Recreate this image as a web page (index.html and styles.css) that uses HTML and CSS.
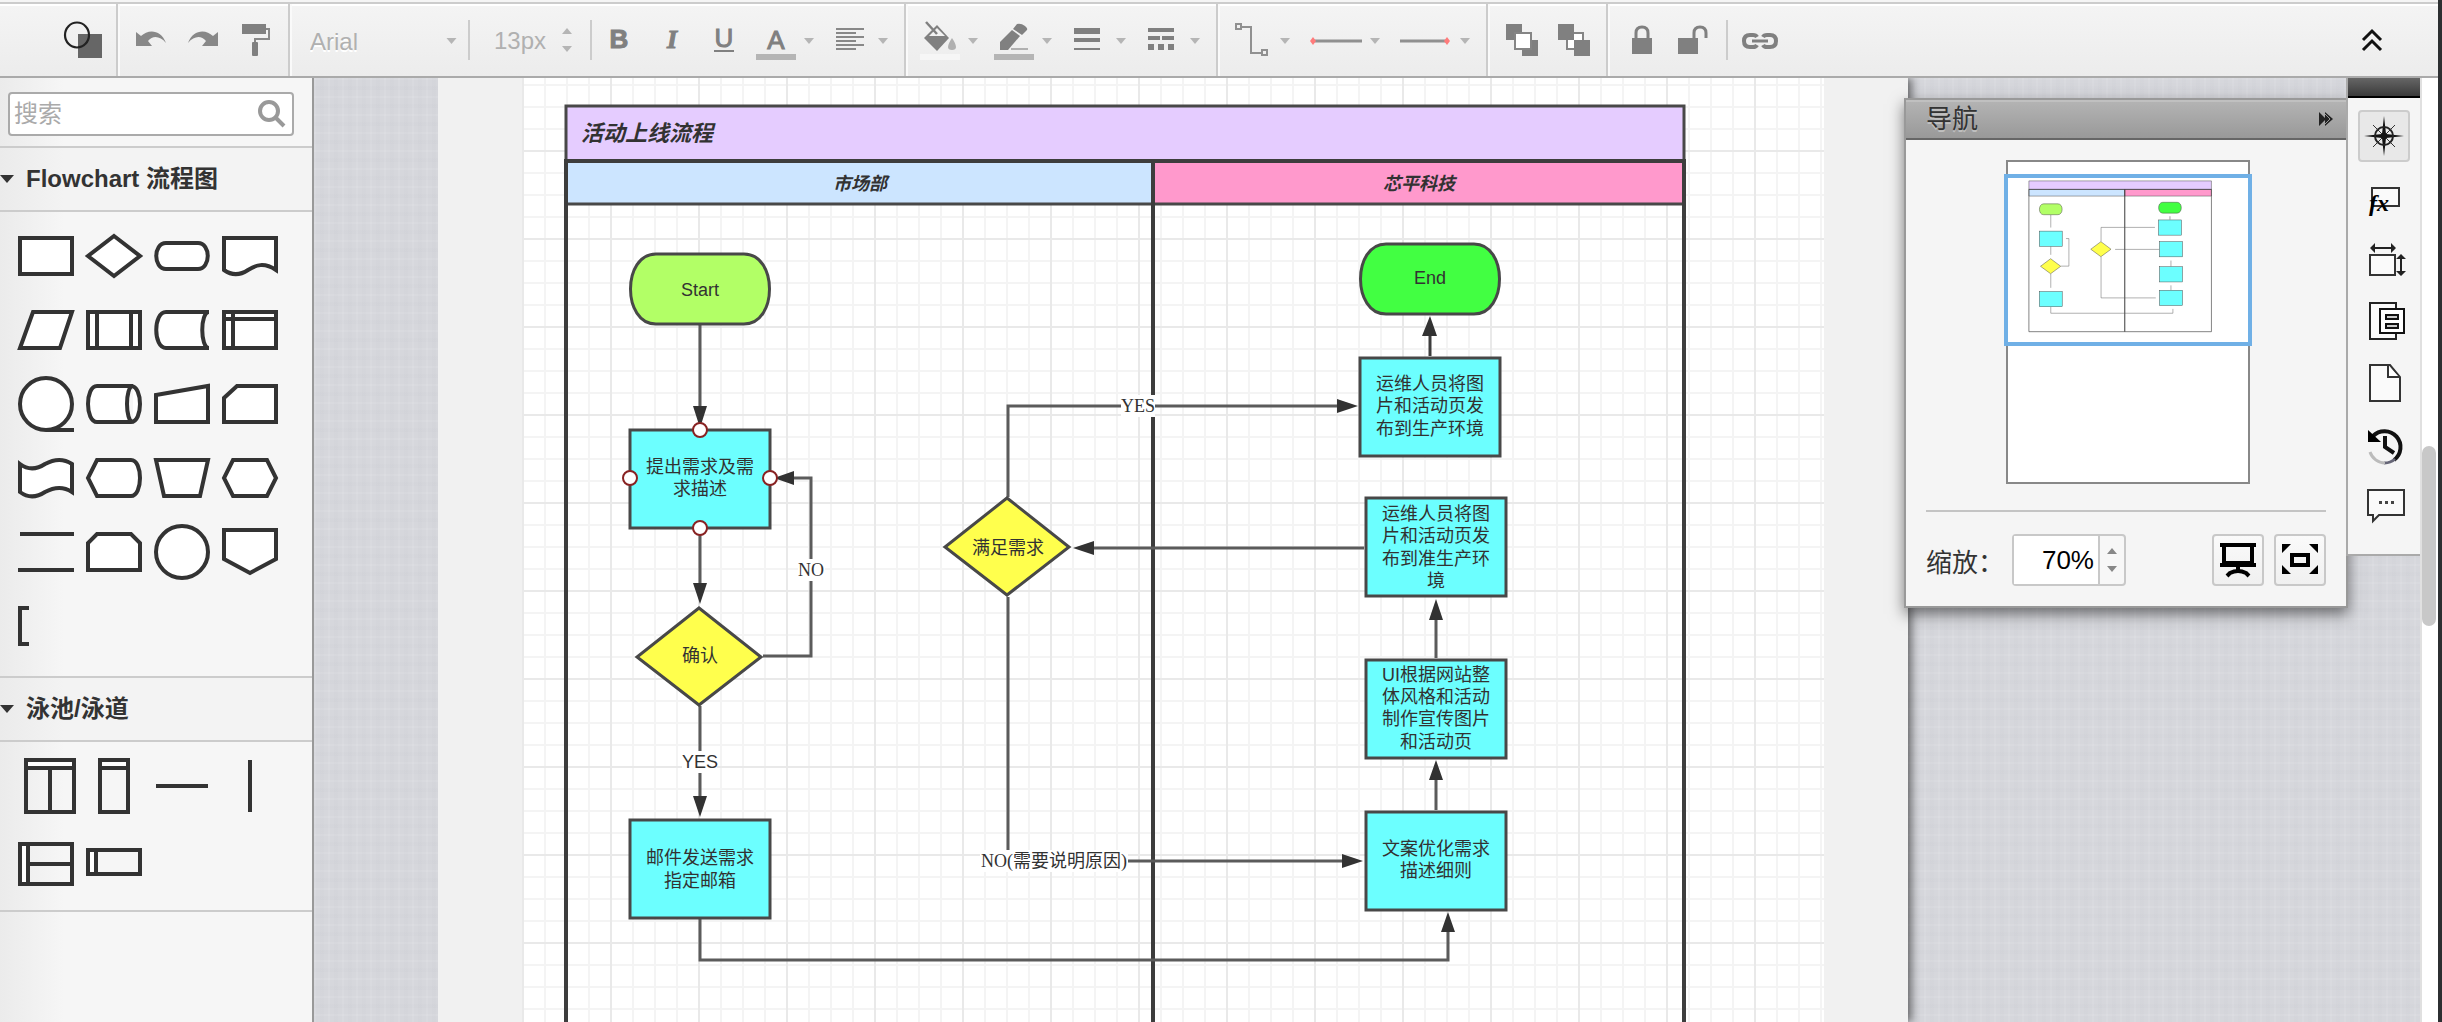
FILE: index.html
```html
<!DOCTYPE html>
<html lang="zh-CN">
<head>
<meta charset="utf-8">
<title>活动上线流程</title>
<link rel="stylesheet" href="styles.css">
</head>
<body>
<div class="app">
  <header class="toolbar">
    <div class="group group-brand">
      <button class="tool" aria-label="图形"><svg width="52" height="70" viewBox="0 6 52 70"><rect x="21" y="34" width="24" height="24" fill="#666"/><ellipse cx="20" cy="35" rx="12" ry="12.500" fill="none" stroke="#222" stroke-width="2.200"/></svg></button>
    </div>
    <div class="group">
      <button class="tool" aria-label="撤销"><svg width="52" height="70" viewBox="0 6 52 70"><path d="M10 32l5 4c7-7 20-7 25 7-6-7-13-8-18-2l4 5H10z" fill="#888"/></svg></button>
      <button class="tool" aria-label="恢复"><svg width="52" height="70" viewBox="0 6 52 70"><path d="M40 32l-5 4c-7-7-20-7-25 7 6-7 13-8 18-2l-4 5h16z" fill="#888"/></svg></button>
      <button class="tool" aria-label="格式刷"><svg width="52" height="70" viewBox="0 6 52 70"><rect x="12" y="24" width="24" height="10" fill="#808080"/><path d="M36 29h3v10H25v3" fill="none" stroke="#888" stroke-width="2"/><rect x="22" y="42" width="6" height="14" rx="1" fill="#808080"/></svg></button>
    </div>
    <div class="group group-text">
      <label class="font"><select aria-label="字体"><option>Arial</option></select><svg width="20" height="70" viewBox="0 6 20 70"><path class="caret" d="M3 38h10l-5 6z"/></svg></label>
      <span class="rule"></span>
      <label class="size"><input type="text" value="13px" aria-label="字号"><svg width="20" height="70" viewBox="0 6 20 70"><path class="caret" d="M2 34h10l-5-6zM2 46h10l-5 6z"/></svg></label>
      <span class="rule"></span>
      <button class="tool" aria-label="粗体"><svg width="52" height="70" viewBox="0 6 52 70"><text class="letter bold" x="27" y="48">B</text></svg></button>
      <button class="tool" aria-label="斜体"><svg width="52" height="70" viewBox="0 6 52 70"><text class="letter italic" x="28" y="48">I</text></svg></button>
      <button class="tool" aria-label="下划线"><svg width="52" height="70" viewBox="0 6 52 70"><text class="letter" x="28" y="47">U</text><path d="M18 51h20" stroke="#808080" stroke-width="2"/></svg></button>
      <button class="tool drop" aria-label="字体颜色"><svg width="74" height="70" viewBox="0 6 74 70"><text class="letter" x="28" y="49">A</text><path d="M8 57h40" stroke="#b5b5b5" stroke-width="6"/><path class="caret" d="M56 38h10l-5 6z"/></svg></button>
      <button class="tool drop" aria-label="对齐"><svg width="74" height="70" viewBox="0 6 74 70"><path d="M14 29h28M14 33h20M14 37h28M14 41h20M14 45h28M14 49h20" stroke="#888" stroke-width="2"/><path class="caret" d="M56 38h10l-5 6z"/></svg></button>
    </div>
    <div class="group">
      <button class="tool drop" aria-label="填充"><svg width="74" height="70" viewBox="0 6 74 70"><path d="M8 57h40" stroke="#f6f6f6" stroke-width="6"/><path d="M12 38L25 25l12 13-12 13z" fill="#808080"/><path d="M17 36l8-8 8 8z" fill="#f2f2f2"/><path d="M14 22l11 12" stroke="#808080" stroke-width="2.500"/><path d="M40 38q8 12 0 12t0-12z" fill="#b0b0b0"/><path class="caret" d="M56 38h10l-5 6z"/></svg></button>
      <button class="tool drop" aria-label="线条颜色"><svg width="74" height="70" viewBox="0 6 74 70"><path d="M8 57h40" stroke="#b5b5b5" stroke-width="6"/><path d="M14 50v-8l12-12 8 6-12 14z" fill="#808080"/><path d="M27 29l4-5q4-1 8 2t1 5l-4 4z" fill="#808080"/><path d="M25 49h17" stroke="#b0b0b0" stroke-width="2"/><path class="caret" d="M56 38h10l-5 6z"/></svg></button>
      <button class="tool drop" aria-label="线条宽度"><svg width="74" height="70" viewBox="0 6 74 70"><path d="M14 28h26v6H14zM14 38h26v4H14zM14 48h26v2H14z" fill="#808080"/><path class="caret" d="M56 38h10l-5 6z"/></svg></button>
      <button class="tool drop" aria-label="线条样式"><svg width="74" height="70" viewBox="0 6 74 70"><path d="M14 28h26v4H14zM14 36h12v4H14zM28 36h12v4H28zM14 44h6v6h-6zM24 44h6v6h-6zM34 44h6v6h-6z" fill="#808080"/><path class="caret" d="M56 38h10l-5 6z"/></svg></button>
    </div>
    <div class="group">
      <button class="tool drop" aria-label="连线类型"><svg width="74" height="70" viewBox="0 6 74 70"><path d="M12 24h5v5h-5zM38 50h5v5h-5zM17 27h10v26h11" fill="none" stroke="#909090" stroke-width="2"/><path class="caret" d="M56 38h10l-5 6z"/></svg></button>
      <button class="tool wide" aria-label="起点"><svg width="90" height="70" viewBox="0 6 90 70"><path d="M14 41h50" stroke="#909090" stroke-width="3"/><path d="M15 37l3 4-3 4-3-4z" fill="#ff7b7b"/><path class="caret" d="M72 38h10l-5 6z"/></svg></button>
      <button class="tool wide" aria-label="终点"><svg width="90" height="70" viewBox="0 6 90 70"><path d="M12 41h46" stroke="#909090" stroke-width="3"/><path d="M59 37l3 4-3 4-3-4z" fill="#ff7b7b"/><path class="caret" d="M72 38h10l-5 6z"/></svg></button>
    </div>
    <div class="group group-even">
      <button class="tool" aria-label="置于顶层"><svg width="52" height="70" viewBox="0 6 52 70"><path d="M10 24h16v16H10zM26 40h16v16H26z" fill="#808080"/><path d="M19 33h16v16H19z" fill="#fff" stroke="#858585" stroke-width="2"/></svg></button>
      <button class="tool" aria-label="置于底层"><svg width="52" height="70" viewBox="0 6 52 70"><path d="M19 33h16v16H19z" fill="#fff" stroke="#858585" stroke-width="2"/><path d="M10 24h16v16H10zM26 40h16v16H26z" fill="#808080"/></svg></button>
    </div>
    <div class="group group-even group-last">
      <button class="tool" aria-label="锁定"><svg width="52" height="70" viewBox="0 6 52 70"><path d="M16 38h20v16H16z" fill="#808080"/><path d="M20 39v-6q0-6 6-6t6 6v6" fill="none" stroke="#808080" stroke-width="3"/></svg></button>
      <button class="tool" aria-label="解锁"><svg width="52" height="70" viewBox="0 6 52 70"><path d="M10 38h20v16H10z" fill="#808080"/><path d="M26 39v-6q0-6 6-6t6 6v5" fill="none" stroke="#808080" stroke-width="3"/></svg></button>
      <span class="rule rule-link"></span>
      <button class="tool" aria-label="链接"><svg width="52" height="70" viewBox="0 6 52 70"><path d="M23 37q-1-2-4-2h-3q-6 0-6 6t6 6h3q3 0 4-2M29 37q1-2 4-2h3q6 0 6 6t-6 6h-3q-3 0-4-2" fill="none" stroke="#808080" stroke-width="4"/><path d="M18 41h16" stroke="#808080" stroke-width="3"/></svg></button>
    </div>
    <button class="tool collapse" aria-label="收起工具栏"><svg width="52" height="70" viewBox="0 6 52 70"><path d="M17 40l9-9 9 9M17 50l9-9 9 9" fill="none" stroke="#111" stroke-width="3"/></svg></button>
  </header>

  <div class="workspace">
    <aside class="sidebar">
      <div class="search">
        <input type="text" placeholder="搜索" aria-label="搜索">
        <svg width="32" height="32" viewBox="0 0 32 32"><circle cx="13" cy="13" r="9" fill="none" stroke="#999" stroke-width="4"/><path d="M19 19l9 9" stroke="#999" stroke-width="4"/></svg>
      </div>
      <h2 class="section"><svg width="14" height="8"><path d="M0 0h14l-7 8z" fill="#333"/></svg>Flowchart 流程图</h2>
      <div class="shapes">
        <svg viewBox="-34 -37 68 74"><path d="M-26-18h52v36h-52z"/></svg>
        <svg viewBox="-34 -37 68 74"><path d="M0-20L26 0 0 20-26 0z"/></svg>
        <svg viewBox="-34 -37 68 74"><path d="M-16-13h32c13 0 13 26 0 26h-32c-13 0-13-26 0-26z"/></svg>
        <svg viewBox="-34 -37 68 74"><path d="M-26-18h52v32C14 6 6 9-2 14c-9 6-17 5-24 0z"/></svg>
        <svg viewBox="-34 -37 68 74"><path d="M-13-18h39l-12 36h-40z"/></svg>
        <svg viewBox="-34 -37 68 74"><path d="M-26-18h52v36h-52zM-17-18v36M17-18v36"/></svg>
        <svg viewBox="-34 -37 68 74"><path d="M27-18h-43c-13 0-13 36 0 36h43c-9 0-9-36 0-36z"/></svg>
        <svg viewBox="-34 -37 68 74"><path d="M-26-18h52v36h-52zM-17-18v36M-26-11h52"/></svg>
        <svg viewBox="-34 -37 68 74"><circle r="26"/><path d="M0 26h28"/></svg>
        <svg viewBox="-34 -37 68 74"><path d="M-17-18h34c12 0 12 36 0 36h-34c-12 0-12-36 0-36zM19-18c-8 0-8 36 0 36"/></svg>
        <svg viewBox="-34 -37 68 74"><path d="M-26-9l52-9v36h-52z"/></svg>
        <svg viewBox="-34 -37 68 74"><path d="M-13-18h39v36h-52V-6z"/></svg>
        <svg viewBox="-34 -37 68 74"><path d="M-26-14c8 6 16 6 25 0 9-5 18-6 27 0v28c-9-6-18-5-27 0-9 6-17 6-25 0z"/></svg>
        <svg viewBox="-34 -37 68 74"><path d="M-17-18h34c12 0 12 36 0 36h-34L-26 0z"/></svg>
        <svg viewBox="-34 -37 68 74"><path d="M-26-18h52l-8 36h-36z"/></svg>
        <svg viewBox="-34 -37 68 74"><path d="M-17-18h34L26 0l-9 18h-34L-26 0z"/></svg>
        <svg viewBox="-34 -37 68 74"><path d="M-26-18h54M-28 18h56"/></svg>
        <svg viewBox="-34 -37 68 74"><path d="M-17-18h34l9 9v27h-52V-9z"/></svg>
        <svg viewBox="-34 -37 68 74"><circle r="26"/></svg>
        <svg viewBox="-34 -37 68 74"><path d="M-26-22h52V7L0 21-26 7z"/></svg>
        <svg viewBox="-34 -37 68 74"><path class="open" d="M-17-18h-9v36h9"/></svg>
      </div>
      <h2 class="section"><svg width="14" height="8"><path d="M0 0h14l-7 8z" fill="#333"/></svg>泳池/泳道</h2>
      <div class="shapes shapes-lanes">
        <svg viewBox="-34 -39 68 78"><path class="open" d="M-20-26h48v52h-48zM4-18v44"/><path d="M-20-26h48v8h-48z"/></svg>
        <svg viewBox="-34 -39 68 78"><path class="open" d="M-14-26h28v52h-28z"/><path d="M-14-26h28v8h-28z"/></svg>
        <svg viewBox="-34 -39 68 78"><path d="M-26 0h52"/></svg>
        <svg viewBox="-34 -39 68 78"><path d="M0-26v52"/></svg>
        <svg viewBox="-34 -39 68 78"><path class="open" d="M-26-20h52v40h-52zM-18 0h44"/><path d="M-26-20h8v40h-8z"/></svg>
        <svg viewBox="-34 -39 68 78"><path class="open" d="M-26-14h52v24h-52z"/><path d="M-26-14h8v24h-8z"/></svg>
      </div>
    </aside>

    <main class="canvas">
      <div class="page">
        <div class="paper">
          <svg class="diagram" width="1302" height="944" viewBox="522 78 1302 944">
            <defs>
              <g id="flow" stroke="#484848" stroke-width="3">
                <path d="M566 106h1118v55H566z" fill="#e5ccff"/>
                <path d="M566 161h587v43H566z" fill="#cce5ff"/>
                <path d="M1153 161h531v43h-531z" fill="#ff99cc"/>
                <path d="M566 161h587v918H566zM1153 161h531v918h-531z" fill="none" stroke-width="4" stroke="#3d3d3d"/>
                <g fill="none" stroke="#5b5b5b">
                  <path d="M700 325v82M700 529v54M700 706v90"/>
                  <path d="M763 656h48V478h-18"/>
                  <path d="M1008 497v-91h330"/>
                  <path d="M1364 548h-270"/>
                  <path d="M1008 597v264h335"/>
                  <path d="M700 919v41h748v-28"/>
                  <path d="M1436 810v-30M1436 658v-38"/>
                  <path d="M1430 356v-22" stroke="#3d3d3d"/>
                </g>
                <path d="M656 254h88c34 0 34 70 0 70h-88c-34 0-34-70 0-70z" fill="#b2ff66"/>
                <path d="M1386 244h88c34 0 34 70 0 70h-88c-34 0-34-70 0-70z" fill="#42ff42"/>
                <g fill="#6cffff">
                  <rect x="630" y="430" width="140" height="98"/>
                  <rect x="630" y="820" width="140" height="98"/>
                  <rect x="1360" y="358" width="140" height="98"/>
                  <rect x="1366" y="498" width="140" height="98"/>
                  <rect x="1366" y="660" width="140" height="98"/>
                  <rect x="1366" y="812" width="140" height="98"/>
                </g>
                <path d="M699 608l62 49-62 48-62-48zM1007 498l62 49-62 48-62-48z" fill="#ffff4d"/>
              </g>
            </defs>
            <use href="#flow"/>
            <path fill="#323232" d="M693 406h14l-7 22zM693 583h14l-7 21zM693 796h14l-7 21zM794 471v14l-20-7zM1337 399v14l21-7zM1094 541v14l-21-7zM1342 854v14l21-7zM1441 932h14l-7-20zM1429 780h14l-7-20zM1429 620h14l-7-21zM1422 336h15l-7-20z"/>
            <path fill="#fff" d="M682 751h35v22h-35zM798 559h27v22h-27zM1121 395h34v22h-34zM980 850h148v22H980z"/>
            <g fill="#fff" stroke="#882222" stroke-width="2"><circle cx="700" cy="430" r="7"/><circle cx="630" cy="478" r="7"/><circle cx="770" cy="478" r="7"/><circle cx="700" cy="528" r="7"/></g>
            <text class="pool-title" x="581" y="141">活动上线流程</text>
            <g class="lane-title"><text x="860" y="190">市场部</text><text x="1419" y="190">芯平科技</text></g>
            <g class="label">
              <text x="700" y="296">Start</text>
              <text x="1430" y="284">End</text>
              <text><tspan x="700" y="473">提出需求及需</tspan><tspan x="700" y="495">求描述</tspan></text>
              <text x="700" y="662">确认</text>
              <text x="700" y="768">YES</text>
              <text><tspan x="700" y="864">邮件发送需求</tspan><tspan x="700" y="887">指定邮箱</tspan></text>
              <text x="1008" y="554">满足需求</text>
              <text><tspan x="1430" y="390">运维人员将图</tspan><tspan x="1430" y="412">片和活动页发</tspan><tspan x="1430" y="435">布到生产环境</tspan></text>
              <text><tspan x="1436" y="520">运维人员将图</tspan><tspan x="1436" y="542">片和活动页发</tspan><tspan x="1436" y="565">布到准生产环</tspan><tspan x="1436" y="587">境</tspan></text>
              <text><tspan x="1436" y="681">UI根据网站整</tspan><tspan x="1436" y="703">体风格和活动</tspan><tspan x="1436" y="725">制作宣传图片</tspan><tspan x="1436" y="748">和活动页</tspan></text>
              <text><tspan x="1436" y="855">文案优化需求</tspan><tspan x="1436" y="877">描述细则</tspan></text>
            </g>
            <g class="label serif"><text x="811" y="576">NO</text><text x="1138" y="412">YES</text><text x="1054" y="867">NO(需要说明原因)</text></g>
          </svg>
        </div>
      </div>

      <section class="navigator">
        <header class="nav-title"><h2>导航</h2><button aria-label="收起"><svg width="16" height="16" viewBox="0 0 16 16"><path d="M1 1l7 7-7 7zM7 1l8 7-8 7z" fill="#222"/><path d="M7 3l5 5-5 5" fill="none" stroke="#999"/></svg></button></header>
        <div class="nav-body">
          <div class="overview">
            <svg viewBox="438 -16 1470 2065" preserveAspectRatio="none"><use href="#flow"/></svg>
            <div class="viewport"></div>
          </div>
          <div class="zoom">
            <label for="zoom">缩放：</label>
            <div class="spinner"><input id="zoom" type="text" value="70%"><svg width="24" height="48" viewBox="0 0 24 48"><path d="M7 18h10l-5-6zM7 30h10l-5 6z" fill="#888"/></svg></div>
            <button class="push push-first" aria-label="演示"><svg width="40" height="40" viewBox="0 0 40 40"><path d="M2 5h36M6 5v18h28V5M2 25h36M20 25v6M9 36l3-3q4-2 8-2t8 2l3 3" fill="none" stroke="#000" stroke-width="4"/></svg></button>
            <button class="push" aria-label="全屏"><svg width="40" height="40" viewBox="0 0 40 40"><path d="M12 15h16v10H12z" fill="none" stroke="#000" stroke-width="4"/><path d="M2 4h9l-9 9zM38 4h-9l9 9zM2 34h9l-9-9zM38 34h-9l9-9z"/></svg></button>
          </div>
        </div>
      </section>

      <nav class="dock">
        <div class="dock-cap"></div>
        <button class="dock-item active" aria-label="导航"><svg viewBox="-24 -24 48 48"><path d="M0-20l2 18 18 2-18 2-2 18-2-18-18-2 18-2z" fill="#111"/><circle r="9" fill="none" stroke="#222" stroke-width="2"/><path d="M-11-11l22 22M11-11l-22 22" stroke="#333" stroke-width="1"/><circle r="3" fill="#111"/></svg></button>
        <button class="dock-item" aria-label="图形属性"><svg viewBox="-24 -24 48 48"><path d="M-12-10h27v18h-27z" fill="#fafafa" stroke="#333" stroke-width="2"/><text class="fx" x="-5" y="13">fx</text></svg></button>
        <button class="dock-item" aria-label="尺寸"><svg viewBox="-24 -24 48 48"><path d="M-14-5h25v20h-25z" fill="#fafafa" stroke="#333" stroke-width="2"/><path d="M-12-12h22M17-3v16" stroke="#222" stroke-width="2"/><path d="M-14-12l5-5v10zM12-12l-5-5V-7zM17-6l-5 5h10zM17 16l-5-5h10z" fill="#222"/></svg></button>
        <button class="dock-item" aria-label="图层"><svg viewBox="-24 -24 48 48"><path d="M-14-19h26v36h-26z" fill="#fafafa" stroke="#222" stroke-width="2"/><path d="M-4-13h24v24H-4z" fill="#fff" stroke="#111" stroke-width="2"/><path d="M2-7h12v4H2zM2 2h12v4H2z" fill="#ccc" stroke="#111" stroke-width="2"/></svg></button>
        <button class="dock-item" aria-label="页面"><svg viewBox="-24 -24 48 48"><path d="M-14-19H6l10 12v24h-30z" fill="#fafafa" stroke="#333" stroke-width="2"/><path d="M4-18V-7h11" fill="#fff" stroke="#333" stroke-width="2"/></svg></button>
        <button class="dock-item" aria-label="历史"><svg viewBox="-24 -24 48 48"><path d="M-11-10A16 16 0 1 1 10 14" fill="none" stroke="#111" stroke-width="4"/><path d="M11 13A16 16 0 0 1 0 17" fill="none" stroke="#667" stroke-width="3"/><path d="M1 17A16 16 0 0 1-14 6" fill="none" stroke="#bbb" stroke-width="3"/><path d="M-16-16v12h13z"/><path d="M1-10V1l9 6" fill="none" stroke="#111" stroke-width="4"/></svg></button>
        <button class="dock-item" aria-label="评论"><svg viewBox="-24 -24 48 48"><path d="M-16-18h36V7H-5l-6 6V7h-5z" fill="#fafafa" stroke="#333" stroke-width="2"/><path d="M-5-7h3v3h-3zM1-7h3v3H1zM7-7h3v3H7z" fill="#444"/></svg></button>
      </nav>
    </main>
    <div class="scrollbar"><div class="thumb"></div></div>
  </div>
</div>
</body>
</html>
```
FILE: styles.css
```css
* { box-sizing: border-box; }
body {
  margin: 0;
  background: #2c2f31;
  color: #333;
  font-family: "Liberation Sans", "Noto Sans CJK SC", sans-serif;
}
button, input, select { font: inherit; }
button { padding: 0; border: 0; background: none; }
svg { display: block; }
h2 { margin: 0; }

.app {
  display: flex;
  flex-direction: column;
  height: 100vh;
  margin-right: 4px;
  padding-top: 2px;
  overflow: hidden;
  background: #f5f5f5;
}

/* Toolbar */
.toolbar {
  display: flex;
  flex: none;
  height: 76px;
  border-top: 2px solid #ccc;
  border-bottom: 2px solid #aaa;
  background: linear-gradient(#fff 2px, #f4f4f4 2px, #ececec);
}
.group {
  display: flex;
  padding: 2px 8px 0 6px;
  border-right: 2px solid #ccc;
  box-shadow: 2px 0 0 #fafafa;
}
.group-brand { width: 118px; padding-left: 57px; padding-right: 0; }
.group-brand + .group { padding: 2px 6px 0 8px; }
.group-text { padding-left: 20px; }
.group-even { padding: 2px 6px 0 8px; }
.group-last { border-right: 0; box-shadow: none; }
.tool { width: 52px; height: 70px; }
.drop { width: 74px; }
.wide { width: 90px; }
.collapse { margin-left: auto; margin-right: 40px; padding-top: 2px; }
.caret { fill: #b5b5b5; }
.rule { width: 2px; height: 40px; margin-top: 14px; background: #ccc; }
.rule-link { margin-left: 6px; margin-right: 6px; }
.font, .size { display: flex; align-items: center; color: #b0b0b0; font-size: 24px; }
.font select {
  width: 129px;
  padding: 0;
  border: 0;
  appearance: none;
  background: none;
  color: inherit;
  text-shadow: 0 2px 0 #fff;
}
.font svg { width: 29px; }
.size { padding-left: 24px; }
.size input { width: 66px; padding: 0; border: 0; background: none; color: inherit; }
.size svg { width: 20px; margin-right: 10px; }
.letter {
  fill: #808080;
  font-size: 26px;
  text-anchor: middle;
  stroke: #808080;
  stroke-width: 1;
}
.bold { font-weight: 700; }
.italic { font-family: "Liberation Serif", serif; font-style: italic; font-weight: 700; }

/* Workspace */
.workspace { display: flex; flex: 1; min-height: 0; }
.sidebar {
  flex: none;
  width: 314px;
  border-right: 2px solid #999;
  background: linear-gradient(to right, #ebebeb, #f6f6f6 64px);
}
.search {
  display: flex;
  align-items: center;
  height: 44px;
  margin: 14px 18px 10px 8px;
  padding: 0 4px;
  border: 2px solid #aaa;
  border-radius: 4px;
  background: #fff;
}
.search input {
  flex: 1;
  min-width: 0;
  padding: 0;
  border: 0;
  font-size: 24px;
  outline: 0;
}
.search input::placeholder { color: #aaa; }
.section {
  display: flex;
  align-items: center;
  gap: 12px;
  height: 66px;
  border-top: 2px solid #ccc;
  border-bottom: 2px solid #ccc;
  background: linear-gradient(to right, #ebebeb, #f3f3f3 64px);
  font-size: 24px;
  font-weight: 700;
  line-height: 32px;
}
.shapes {
  display: grid;
  grid-template-columns: repeat(4, 68px);
  grid-auto-rows: 74px;
  padding: 7px 12px 13px;
}
.shapes-lanes {
  grid-auto-rows: 78px;
  padding: 5px 12px 7px;
  border-bottom: 2px solid #ccc;
}
.shapes svg { fill: #fff; stroke: #333; stroke-width: 4; }
.shapes .open { fill: none; }

/* Canvas */
.canvas {
  position: relative;
  flex: 1;
  min-width: 0;
  overflow: hidden;
  background:
    repeating-linear-gradient(90deg, rgba(255, 255, 255, .08) 0 2px, transparent 2px 6px, rgba(120, 125, 140, .02) 6px 10px, transparent 10px 14px),
    repeating-linear-gradient(rgba(255, 255, 255, .08) 0 2px, transparent 2px 8px, rgba(120, 125, 140, .02) 8px 12px, transparent 12px 18px),
    #d6d7dc;
}
.page {
  width: 1470px;
  height: 100%;
  margin-left: 124px;
  padding-left: 84px;
  background: #f1f1f1;
  box-shadow: 4px 0 8px rgba(0, 0, 0, .5);
  clip-path: inset(0 -16px 0 0);
}
.paper {
  width: 1302px;
  height: 100%;
  background:
    linear-gradient(90deg, #e9e9e9 2px, transparent 2px) 0 0 / 88px 88px,
    linear-gradient(#e9e9e9 2px, transparent 2px) 0 72px / 88px 88px,
    linear-gradient(90deg, #f4f4f4 2px, transparent 2px) 0 0 / 22px 22px,
    linear-gradient(#f4f4f4 2px, transparent 2px) 0 6px / 22px 22px,
    #fff;
}
.pool-title, .lane-title { fill: #323232; font-style: italic; font-weight: 700; }
.pool-title { font-size: 22px; }
.lane-title { font-size: 18px; text-anchor: middle; }
.label { fill: #323232; font-size: 18px; text-anchor: middle; }
.serif { font-family: "Liberation Serif", "Noto Sans CJK SC", serif; }

/* Navigator */
.navigator {
  position: absolute;
  top: 20px;
  right: 72px;
  width: 444px;
  border: 2px solid #999;
  background: #f5f5f5;
  box-shadow: 0 6px 14px rgba(0, 0, 0, .5);
}
.nav-title {
  display: flex;
  align-items: center;
  justify-content: space-between;
  height: 40px;
  padding: 0 12px 0 20px;
  border-bottom: 2px solid #666;
  background: linear-gradient(#c0c0c0 2px, #b3b3b3 2px, #999);
}
.nav-title h2 {
  font-size: 26px;
  font-weight: 400;
  line-height: 36px;
  text-shadow: 0 2px 0 #c0c0c0;
}
.nav-body { padding: 20px; }
.overview {
  position: relative;
  width: 244px;
  height: 324px;
  margin: 0 auto 26px 80px;
  border: 2px solid #888;
  background: #fff;
}
.overview svg { width: 240px; height: 320px; }
.viewport {
  position: absolute;
  top: 12px;
  left: -4px;
  width: 248px;
  height: 172px;
  border: 4px solid #70b0e6;
}
.zoom {
  display: flex;
  align-items: center;
  padding-top: 22px;
  border-top: 2px solid #c4c4c4;
  font-size: 26px;
}
.zoom label { width: 86px; white-space: nowrap; }
.spinner {
  display: flex;
  width: 114px;
  height: 52px;
  border: 2px solid #c8c8c8;
  border-radius: 4px;
  background: #f7f7f7;
}
.spinner input {
  width: 86px;
  padding: 0 4px 0 0;
  border: 0;
  border-right: 2px solid #c8c8c8;
  color: #000;
  text-align: right;
}
.push {
  display: grid;
  place-items: center;
  width: 52px;
  height: 52px;
  margin-left: 10px;
  border: 2px solid #c8c8c8;
  border-radius: 4px;
  background: linear-gradient(#fafafa, #f0f0f0);
}
.push-first { margin-left: auto; }

/* Dock */
.dock {
  position: absolute;
  top: 0;
  right: 0;
  display: flex;
  flex-direction: column;
  align-items: center;
  gap: 10px;
  width: 74px;
  padding-bottom: 20px;
  border-left: 2px solid #aaa;
  border-bottom: 2px solid #aaa;
  background: #f5f5f5;
}
.dock-cap {
  align-self: stretch;
  height: 20px;
  margin-bottom: 2px;
  border-bottom: 2px solid #000;
  background: linear-gradient(#666, #3a3a3a);
}
.dock-item { display: grid; place-items: center; width: 52px; height: 52px; }
.dock-item svg { width: 48px; height: 48px; }
.active { border: 2px solid #ccc; border-radius: 4px; background: #e8e8e8; }
.fx { font-family: "Liberation Serif", serif; font-size: 24px; font-style: italic; font-weight: 700; text-anchor: middle; }

.scrollbar {
  flex: none;
  width: 18px;
  padding: 368px 2px 0 0;
  border-left: 2px solid #e0e0e0;
  background: #fff;
}
.thumb { height: 180px; border-radius: 7px; background: #c8c8c8; }
```
